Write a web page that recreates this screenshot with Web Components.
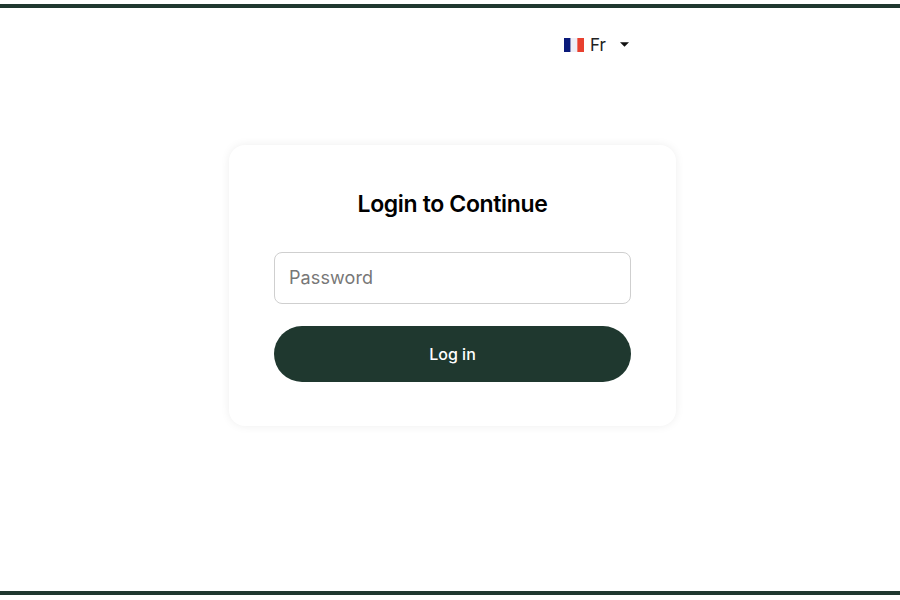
<!DOCTYPE html>
<html lang="en">
<head>
<meta charset="utf-8">
<title>Login</title>
<style>
  html, body { margin: 0; padding: 0; background: #fff; }
  body { font-family: "Inter", "Liberation Sans", sans-serif; }
</style>
</head>
<body>
<login-page>
  <lang-picker slot="lang" code="Fr"></lang-picker>
  <login-card slot="card" heading="Login to Continue"></login-card>
</login-page>

<script>
class LoginPage extends HTMLElement {
  connectedCallback() {
    const shadow = this.attachShadow({ mode: "open" });
    shadow.innerHTML = `
      <style>
        :host {
          display: flex;
          flex-direction: column;
          box-sizing: border-box;
          width: 900px;
          height: 600px;
          padding: 4px 0 5px;
          overflow: hidden;
        }
        .frame {
          flex: 1;
          display: flex;
          flex-direction: column;
          align-items: center;
          border-top: 4px solid #1f382f;
          border-bottom: 4px solid #1f382f;
        }
        .top {
          width: 900px;
          display: flex;
          justify-content: flex-start;
          padding: 25px 0 0 564px;
          box-sizing: border-box;
          height: 137px;
        }
        .center {
          width: 900px;
          padding-left: 229px;
          box-sizing: border-box;
        }
      </style>
      <div class="frame">
        <div class="top"><slot name="lang"></slot></div>
        <div class="center"><slot name="card"></slot></div>
      </div>
    `;
  }
}

class LangPicker extends HTMLElement {
  connectedCallback() {
    const code = this.getAttribute("code") || "Fr";
    const shadow = this.attachShadow({ mode: "open" });
    shadow.innerHTML = `
      <style>
        :host {
          display: flex;
          align-items: center;
          height: 24px;
          font-family: "Inter", "Liberation Sans", sans-serif;
          font-size: 17px;
          color: #222;
        }
        svg.flag { display: block; width: 20px; height: 14px; }
        span { margin-left: 6px; width: 30px; }
        svg.caret { display: block; width: 9px; height: 5px; margin-top: -1px; }
      </style>
      <svg class="flag" viewBox="0 0 21 14" preserveAspectRatio="none" aria-hidden="true">
        <rect width="7" height="14" fill="#0a1a7a"/>
        <rect x="7" width="7" height="14" fill="#eeeef6"/>
        <rect x="14" width="7" height="14" fill="#e8402f"/>
      </svg>
      <span>${code}</span>
      <svg class="caret" viewBox="0 0 10 5" aria-hidden="true"><path d="M0 0h10L5 5z" fill="#111"/></svg>
    `;
  }
}

class LoginCard extends HTMLElement {
  connectedCallback() {
    const heading = this.getAttribute("heading") || "";
    const shadow = this.attachShadow({ mode: "open" });
    shadow.innerHTML = `
      <style>
        :host {
          display: block;
          box-sizing: border-box;
          width: 447px;
          height: 281px;
          padding: 45px 45px 0;
          border-radius: 16px;
          background: #fff;
          box-shadow: 0 0 10px rgba(0, 0, 0, 0.07);
          font-family: "Inter", "Liberation Sans", sans-serif;
        }
        h2 {
          margin: 0 0 34px;
          height: 28px;
          line-height: 28px;
          text-align: center;
          font-size: 23px;
          font-weight: 600;
          letter-spacing: -0.35px;
          color: #000;
        }
        input {
          display: block;
          box-sizing: border-box;
          width: 357px;
          height: 52px;
          margin: 0 0 22px;
          padding: 0 14px 2px;
          border: 1px solid #cfcfcf;
          border-radius: 8px;
          background: #fff;
          font: 400 18px "Inter", "Liberation Sans", sans-serif;
          letter-spacing: 0.12px;
          color: #333;
        }
        input::placeholder { color: #777; opacity: 1; }
        button {
          display: block;
          width: 357px;
          height: 56px;
          border: 0;
          border-radius: 28px;
          background: #1f382f;
          color: #fff;
          font: 500 16px "Inter", "Liberation Sans", sans-serif;
        }
      </style>
      <h2>${heading}</h2>
      <input type="password" placeholder="Password">
      <button type="button">Log in</button>
    `;
  }
}

customElements.define("login-page", LoginPage);
customElements.define("lang-picker", LangPicker);
customElements.define("login-card", LoginCard);
</script>
</body>
</html>
